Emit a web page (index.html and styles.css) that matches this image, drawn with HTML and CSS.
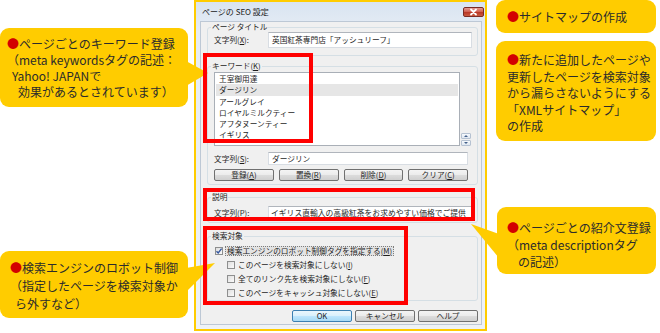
FILE: index.html
```html
<!DOCTYPE html>
<html lang="ja">
<head>
<meta charset="utf-8">
<title>ページの SEO 設定</title>
<link rel="stylesheet" href="styles.css">
</head>
<body>
<div class="page">
  <div class="col-left">
    <div class="callout cl1">
      <p><span class="dot">●</span>ページごとのキーワード登録</p>
      <p>（meta keywordsタグの記述：</p>
      <p class="ind-s">Yahoo! JAPANで</p>
      <p class="ind-l">効果があるとされています）</p>
    </div>
    <div class="callout cl2">
      <p><span class="dot">●</span>検索エンジンのロボット制御</p>
      <p>（指定したページを検索対象か</p>
      <p class="ind-s">ら外すなど）</p>
    </div>
  </div>

  <div class="dialog">
    <div class="titlebar">
      <span class="title">ページの SEO 設定</span>
      <span class="close"><svg width="21" height="10" viewBox="0 0 21 10"><path d="M8 2.5 L13 7.5 M13 2.5 L8 7.5" stroke="#fff" stroke-width="1.8" stroke-linecap="round"/></svg></span>
    </div>
    <div class="panel">
      <fieldset class="grp g1">
        <legend>ページ タイトル</legend>
        <div class="row">
          <span class="lbl">文字列(<u>X</u>):</span>
          <div class="field f-title">英国紅茶専門店「アッシュリーフ」</div>
        </div>
      </fieldset>

      <fieldset class="grp g2">
        <legend>キーワード(<u>K</u>)</legend>
        <div class="listrow">
          <ul class="listbox">
            <li>王室御用達</li>
            <li class="sel">ダージリン</li>
            <li>アールグレイ</li>
            <li>ロイヤルミルクティー</li>
            <li>アフタヌーンティー</li>
            <li>イギリス</li>
          </ul>
          <div class="spin"><span class="sp up"></span><span class="sp down"></span></div>
        </div>
        <div class="row r-s">
          <span class="lbl">文字列(<u>S</u>):</span>
          <div class="field f-kw">ダージリン</div>
        </div>
        <div class="btnrow">
          <span class="btn">登録(<u>A</u>)</span>
          <span class="btn">置換(<u>R</u>)</span>
          <span class="btn">削除(<u>D</u>)</span>
          <span class="btn">クリア(<u>C</u>)</span>
        </div>
      </fieldset>

      <fieldset class="grp g3">
        <legend>説明</legend>
        <div class="row r-p">
          <span class="lbl">文字列(<u>P</u>):</span>
          <div class="field f-desc">イギリス直輸入の高級紅茶をお求めやすい価格でご提供</div>
        </div>
      </fieldset>

      <fieldset class="grp g4">
        <legend>検索対象</legend>
        <div class="chk main"><span class="box on"><svg width="8" height="8" viewBox="0 0 8 8"><path d="M1.5 4.2 L3.2 6 L6.6 1.6" fill="none" stroke="#3457a0" stroke-width="1.4"/></svg></span><span class="focus">検索エンジンのロボット制御タグを指定する(<u>M</u>)</span></div>
        <div class="chk sub"><span class="box"></span><span class="txt">このページを検索対象にしない(<u>I</u>)</span></div>
        <div class="chk sub"><span class="box"></span><span class="txt">全てのリンク先を検索対象にしない(<u>F</u>)</span></div>
        <div class="chk sub"><span class="box"></span><span class="txt">このページをキャッシュ対象にしない(<u>E</u>)</span></div>
      </fieldset>

      <div class="actions">
        <span class="btn def">OK</span>
        <span class="btn">キャンセル</span>
        <span class="btn">ヘルプ</span>
      </div>
    </div>
  </div>

  <div class="col-right">
    <div class="callout cr1"><p><span class="dot">●</span>サイトマップの作成</p></div>
    <div class="callout cr2">
      <p><span class="dot">●</span>新たに追加したページや</p>
      <p>更新したページを検索対象</p>
      <p>から漏らさないようにする</p>
      <p>「XMLサイトマップ」</p>
      <p>の作成</p>
    </div>
    <div class="callout cr3">
      <p><span class="dot">●</span>ページごとの紹介文登録</p>
      <p>（meta descriptionタグ</p>
      <p class="ind-l">の記述）</p>
    </div>
  </div>
</div>

<svg class="pointers" width="660" height="333" viewBox="0 0 660 333">
  <polygon points="186,61 186,86 208,73" fill="#fc0"/>
  <polygon points="186,268 186,292 215,263" fill="#fc0"/>
  <polygon points="499,234 499,258 471,224" fill="#fc0"/>
</svg>
<div class="mark m1"></div>
<div class="mark m2"></div>
<div class="mark m3"></div>
</body>
</html>
```

FILE: styles.css
```css
* { box-sizing: border-box; margin: 0; padding: 0; }

html, body {
  width: 660px;
  height: 333px;
  overflow: hidden;
  background: #fff;
}

body {
  position: relative;
  font-family: "Noto Sans CJK JP", "Noto Sans", sans-serif;
  color: #222;
}

.page {
  display: flex;
  align-items: flex-start;
  height: 333px;
}

/* ---------- callouts ---------- */
.callout {
  background: #fc0;
  border-radius: 9px;
  font-size: 12px;
  white-space: nowrap;
  color: #2b2b2b;
}
.callout p { display: block; }
.dot { color: #d30000; }
.ind-s { padding-left: 5px; }
.ind-l { padding-left: 11px; }

.col-left {
  width: 188px;
  display: flex;
  flex-direction: column;
}
.cl1 {
  margin-top: 28px;
  height: 79px;
  padding: 8px 0 0 7px;
  line-height: 16px;
}
.cl2 {
  margin-top: 144px;
  height: 67px;
  padding: 8px 0 0 10px;
  line-height: 18px;
}

.col-right {
  margin-left: 9px;
  width: 160px;
  display: flex;
  flex-direction: column;
}
.cr1 {
  height: 33px;
  padding-left: 11px;
  line-height: 33px;
}
.cr2 {
  margin-top: 8px;
  height: 100px;
  padding: 11px 0 0 11px;
  line-height: 16.6px;
}
.cr3 {
  margin-top: 66px;
  margin-left: 1px;
  height: 67px;
  padding: 12px 0 0 10px;
  line-height: 17px;
}

/* ---------- dialog ---------- */
.dialog {
  margin-left: 6px;
  width: 293px;
  height: 331px;
  border: 2px solid #fc0;
  background: linear-gradient(#d9e4f1, #e6edf5 30px, #eef2f7);
  padding: 0 3px 4px 4px;
  display: flex;
  flex-direction: column;
  font-size: 7.7px;
  color: #1e1e1e;
}

.titlebar {
  height: 19px;
  display: flex;
  align-items: center;
  justify-content: space-between;
  padding-left: 2px;
}
.title {
  font-size: 8px;
  line-height: 10px;
  color: #1a1a1a;
}
.close {
  align-self: flex-start;
  margin-top: 5px;
  margin-right: -2px;
  width: 21px;
  height: 10px;
  border: 1px solid #7a2b24;
  border-radius: 2px;
  background: linear-gradient(#e39a90, #cf5b4c 50%, #b83524 51%, #c95a3f);
  display: flex;
}
.close svg { display: block; margin: -1px; }

.panel {
  flex: 1;
  background: #f0f0f0;
  border: 1px solid #bdc8d5;
  padding: 0 3px 0 6px;
  display: flex;
  flex-direction: column;
}

.grp {
  border: 1px solid #d5dfe5;
  border-radius: 3px;
  margin: 0;
  padding: 0;
  min-width: 0;
}
.grp legend {
  margin-left: 3px;
  padding: 0 1px;
  height: 10px;
  line-height: 10px;
  font-size: 7.7px;
}

.g1 { padding-bottom: 7px; }
.g2 { margin-top: 5px; padding-bottom: 3px; }
.g3 { margin-top: 7px; padding-bottom: 3px; }
.g4 { margin-top: 8px; padding-top: 3px; }

.row {
  display: flex;
  align-items: center;
  padding-left: 6px;
}
.lbl {
  width: 54px;
  line-height: 10px;
}
.field {
  background: #fff;
  border: 1px solid #d8dde3;
  border-top-color: #b0b5bc;
  padding-left: 3px;
  white-space: nowrap;
  overflow: hidden;
}
.f-title { width: 204px; height: 16px; line-height: 14px; }
.f-kw { width: 200px; height: 13px; line-height: 11px; }
.f-desc { width: 204px; height: 13px; line-height: 11px; font-size: 7.8px; padding-left: 2px; }
.r-s { margin-top: 6px; }
.r-p { margin-top: 4px; }

.listrow {
  display: flex;
  align-items: flex-end;
  padding-left: 6px;
  margin-top: 1px;
}
.listbox {
  list-style: none;
  width: 246px;
  height: 74px;
  background: #fff;
  border: 1px solid #a9afb7;
  overflow: hidden;
}
.listbox li {
  height: 11.3px;
  line-height: 11.3px;
  padding-left: 4px;
  white-space: nowrap;
}
.listbox li.sel {
  background: #e6e6e6;
  margin: 0 1px;
  padding-left: 3px;
}

.spin {
  margin-left: 1px;
  width: 10px;
  height: 13px;
  display: flex;
  flex-direction: column;
  gap: 1px;
}
.sp {
  flex: 1;
  border: 1px solid #b6c2d2;
  border-radius: 1px;
  background: linear-gradient(#f6f9fc, #dfe7f1);
  display: flex;
  align-items: center;
  justify-content: center;
}
.sp::after {
  content: "";
  width: 0;
  height: 0;
  border-left: 2.5px solid transparent;
  border-right: 2.5px solid transparent;
}
.up::after { border-bottom: 2.5px solid #44608a; }
.down::after { border-top: 2.5px solid #44608a; }

.btnrow {
  display: grid;
  grid-template-columns: repeat(4, 1fr);
  gap: 5px;
  width: 254px;
  margin: 4px 0 0 6px;
}
.btn {
  display: block;
  height: 12px;
  line-height: 10px;
  text-align: center;
  border: 1px solid #707070;
  border-radius: 2px;
  background: linear-gradient(#f4f4f4, #ebebeb 50%, #dcdcdc 51%, #cfcfcf);
  white-space: nowrap;
}
.btn.def {
  border-color: #3c7fb1;
  background: linear-gradient(#eaf6fd, #d9f0fc 50%, #bee6fd 51%, #a7d9f5);
}

.chk {
  display: flex;
  align-items: center;
  height: 14px;
  white-space: nowrap;
}
.chk.main { padding-left: 7px; }
.chk.sub { padding-left: 19px; }
.box {
  width: 8px;
  height: 8px;
  border: 1px solid #8e8f8f;
  background: linear-gradient(135deg, #dedede, #fbfbfb);
  display: flex;
}
.box svg { display: block; margin: -1px; }
.focus {
  margin-left: 2px;
  padding: 0 1px;
  height: 10px;
  line-height: 8px;
  background: #e3e3e3;
  border: 1px dotted #7d7d7d;
}
.txt {
  margin-left: 3px;
  line-height: 10px;
}

.actions {
  display: flex;
  justify-content: flex-end;
  gap: 3px;
  margin-top: 9px;
}
.actions .btn { width: 60px; }

/* ---------- overlays ---------- */
.pointers {
  position: absolute;
  left: 0;
  top: 0;
  pointer-events: none;
}
.mark {
  position: absolute;
  border: 4px solid #f00;
}
.m1 { left: 203px; top: 53px; width: 110px; height: 90px; }
.m2 { left: 203px; top: 188px; width: 272px; height: 33px; }
.m3 { left: 203px; top: 226px; width: 205px; height: 79px; }
```
